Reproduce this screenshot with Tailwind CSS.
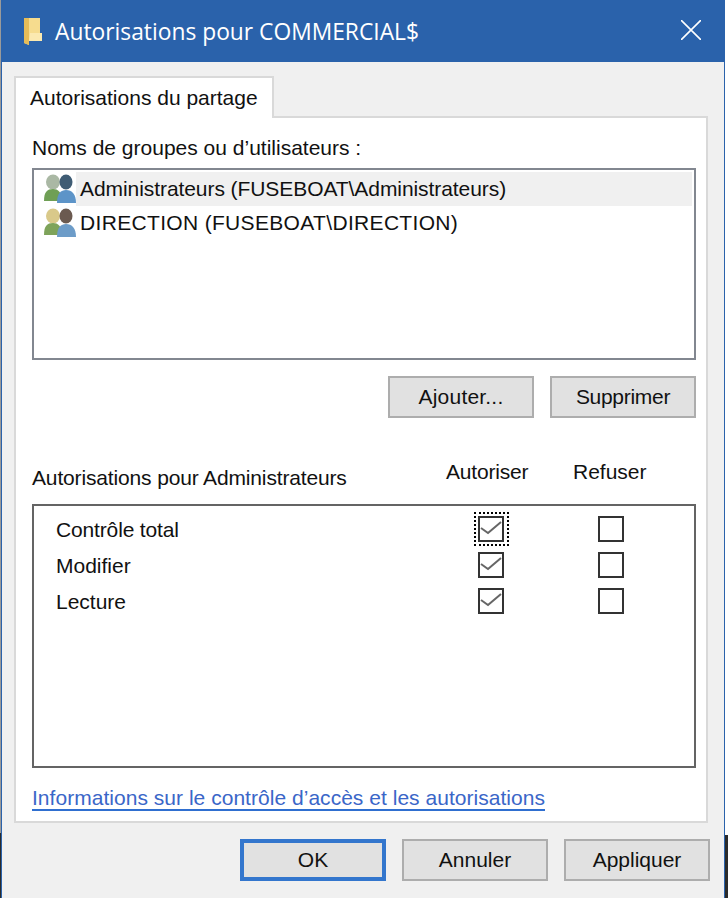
<!DOCTYPE html>
<html lang="fr">
<head>
    <meta charset="UTF-8">
    <title>Autorisations pour COMMERCIAL$</title>
    <script src="https://cdn.jsdelivr.net/npm/@tailwindcss/browser@4"></script>
</head>
<body class="bg-white overflow-hidden">
    <div class="flex h-[898px] w-[728px] font-['Liberation_Sans',sans-serif] text-[21px] text-[#111]">
        <!-- Screen edge on the left -->
        <div class="flex w-px flex-col justify-end bg-[#9a9a9a]">
            <div class="h-[65px] bg-[#2b2b2b]"></div>
        </div>

        <!-- Window -->
        <div class="flex w-[724px] flex-col border-l border-r border-[#2a62ab] bg-[#f0f0f0]">
            <!-- Title bar -->
            <div class="flex h-[62px] shrink-0 items-center bg-[#2a62ab] pl-[22px] pr-[23px] text-white">
                <svg class="mr-[13px] h-[27px] w-[18px]" viewBox="0 0 18 27">
                    <path d="M0 0 H16 V15 H18 V23 H5 V27 L0 25 Z" fill="#f6dc8e"/>
                    <path d="M6 15 H18 V23 H5 Z" fill="#fbe9b0"/>
                    <path d="M0 0 H5 V27 L0 25 Z" fill="#e6bc58"/>
                </svg>
                <span class="flex-1 pt-[3px] font-['Open_Sans',sans-serif] text-[22.8px]">Autorisations pour COMMERCIAL$</span>
                <svg class="-mt-[2px] h-[20px] w-[20px]" viewBox="0 0 20 20" stroke="#fff" stroke-width="1.6" fill="none">
                    <path d="M0 0 L20 20 M20 0 L0 20"/>
                </svg>
            </div>

            <!-- Tab -->
            <div class="relative z-10 ml-[12px] mt-[14px] -mb-[2px] flex h-[42px] w-[260px] items-center border-2 border-b-0 border-[#d9d9d9] bg-white pl-[14px]">
                Autorisations du partage
            </div>

            <!-- Panel -->
            <div class="ml-[12px] mr-[16px] flex h-[707px] flex-col border-2 border-[#d9d9d9] bg-white pl-[16px] pr-[10px]">
                <div class="mt-[16px] h-[34px] leading-[28px]">Noms de groupes ou d’utilisateurs :</div>

                <!-- User list -->
                <div class="flex h-[192px] flex-col border-2 border-[#828790] pl-[10px] pr-[2px] pt-[2px]">
                    <div class="flex h-[34px] items-center">
                        <svg class="h-[30px] w-[32px] shrink-0" viewBox="0 0 32 30">
                            <ellipse cx="9" cy="8" rx="7" ry="7.5" fill="#aab8a4"/>
                            <path d="M0 27 C0 18 3 15 9 15 C14 15 18 18 18 27 Z" fill="#6f9f55"/>
                            <ellipse cx="22" cy="8" rx="6.5" ry="7.5" fill="#3f5c74"/>
                            <path d="M13 29 C13 19 17 16 22 16 C28 16 32 20 32 29 Z" fill="#5d94c8"/>
                        </svg>
                        <span class="flex h-full flex-1 items-center bg-[#f0f0f0] pl-[4px] tracking-[-0.07px]">Administrateurs (FUSEBOAT\Administrateurs)</span>
                    </div>
                    <div class="flex h-[34px] items-center">
                        <svg class="h-[30px] w-[32px] shrink-0" viewBox="0 0 32 30">
                            <ellipse cx="9" cy="8" rx="7" ry="7.5" fill="#d9c98a"/>
                            <path d="M0 27 C0 18 3 15 9 15 C14 15 18 18 18 27 Z" fill="#7ea35a"/>
                            <ellipse cx="22" cy="8" rx="6.5" ry="7.5" fill="#6b5a50"/>
                            <path d="M13 29 C13 19 17 16 22 16 C28 16 32 20 32 29 Z" fill="#6d9cc8"/>
                        </svg>
                        <span class="pl-[4px] tracking-[0.33px]">DIRECTION (FUSEBOAT\DIRECTION)</span>
                    </div>
                </div>

                <div class="mt-[16px] flex justify-end gap-4">
                    <button class="h-[42px] w-[146px] border-2 border-[#adadad] bg-[#e1e1e1] tracking-[0.2px]">Ajouter...</button>
                    <button class="h-[42px] w-[146px] border-2 border-[#adadad] bg-[#e1e1e1] tracking-[-0.3px]">Supprimer</button>
                </div>

                <!-- Permissions header -->
                <div class="mt-[30px] flex h-[56px]">
                    <span class="w-[414px] pt-[16px] leading-[28px] tracking-[-0.15px]">Autorisations pour Administrateurs</span>
                    <span class="w-[127px] pt-[10px] leading-[28px] tracking-[-0.2px]">Autoriser</span>
                    <span class="pt-[10px] leading-[28px]">Refuser</span>
                </div>

                <!-- Permissions list -->
                <div class="flex h-[264px] flex-col gap-[10px] border-2 border-[#646464] pl-[22px] pt-[10px]">
                    <div class="flex h-[26px] items-center">
                        <span class="w-[422px] pt-[2px] tracking-[-0.15px]">Contrôle total</span>
                        <span class="relative flex h-[26px] w-[26px] items-center justify-center border-2 border-[#333]">
                            <svg class="h-[22px] w-[22px]" viewBox="0 0 22 22" fill="none" stroke="#666" stroke-width="2"><path d="M1 10 L8 15 L21 4"/></svg>
                            <span class="absolute -bottom-[6px] -left-[6px] -right-[7px] -top-[6px] border-2 border-dotted border-black"></span>
                        </span>
                        <span class="ml-[94px] h-[26px] w-[26px] border-2 border-[#333]"></span>
                    </div>
                    <div class="flex h-[26px] items-center">
                        <span class="w-[422px] pt-[2px]">Modifier</span>
                        <span class="flex h-[26px] w-[26px] items-center justify-center border-2 border-[#333]">
                            <svg class="h-[22px] w-[22px]" viewBox="0 0 22 22" fill="none" stroke="#666" stroke-width="2"><path d="M1 10 L8 15 L21 4"/></svg>
                        </span>
                        <span class="ml-[94px] h-[26px] w-[26px] border-2 border-[#333]"></span>
                    </div>
                    <div class="flex h-[26px] items-center">
                        <span class="w-[422px] pt-[2px]">Lecture</span>
                        <span class="flex h-[26px] w-[26px] items-center justify-center border-2 border-[#333]">
                            <svg class="h-[22px] w-[22px]" viewBox="0 0 22 22" fill="none" stroke="#666" stroke-width="2"><path d="M1 10 L8 15 L21 4"/></svg>
                        </span>
                        <span class="ml-[94px] h-[26px] w-[26px] border-2 border-[#333]"></span>
                    </div>
                </div>

                <a class="mt-[18px] self-start border-b-2 border-[#2f6fd0] leading-[23px] tracking-[0.03px] text-[#3a66c8]">Informations sur le contrôle d’accès et les autorisations</a>
            </div>

            <!-- Footer buttons -->
            <div class="mr-[14px] mt-[16px] flex justify-end gap-4">
                <button class="h-[42px] w-[146px] border-[4px] border-[#3376cd] bg-[#e1e1e1]">OK</button>
                <button class="h-[42px] w-[146px] border-2 border-[#adadad] bg-[#e1e1e1]">Annuler</button>
                <button class="h-[42px] w-[146px] border-2 border-[#adadad] bg-[#e1e1e1]">Appliquer</button>
            </div>
        </div>

        <!-- Desktop behind the window -->
        <div class="flex flex-1 flex-col justify-end bg-white">
            <div class="h-[63px] bg-[#2b2b2b]"></div>
        </div>
    </div>
</body>
</html>
